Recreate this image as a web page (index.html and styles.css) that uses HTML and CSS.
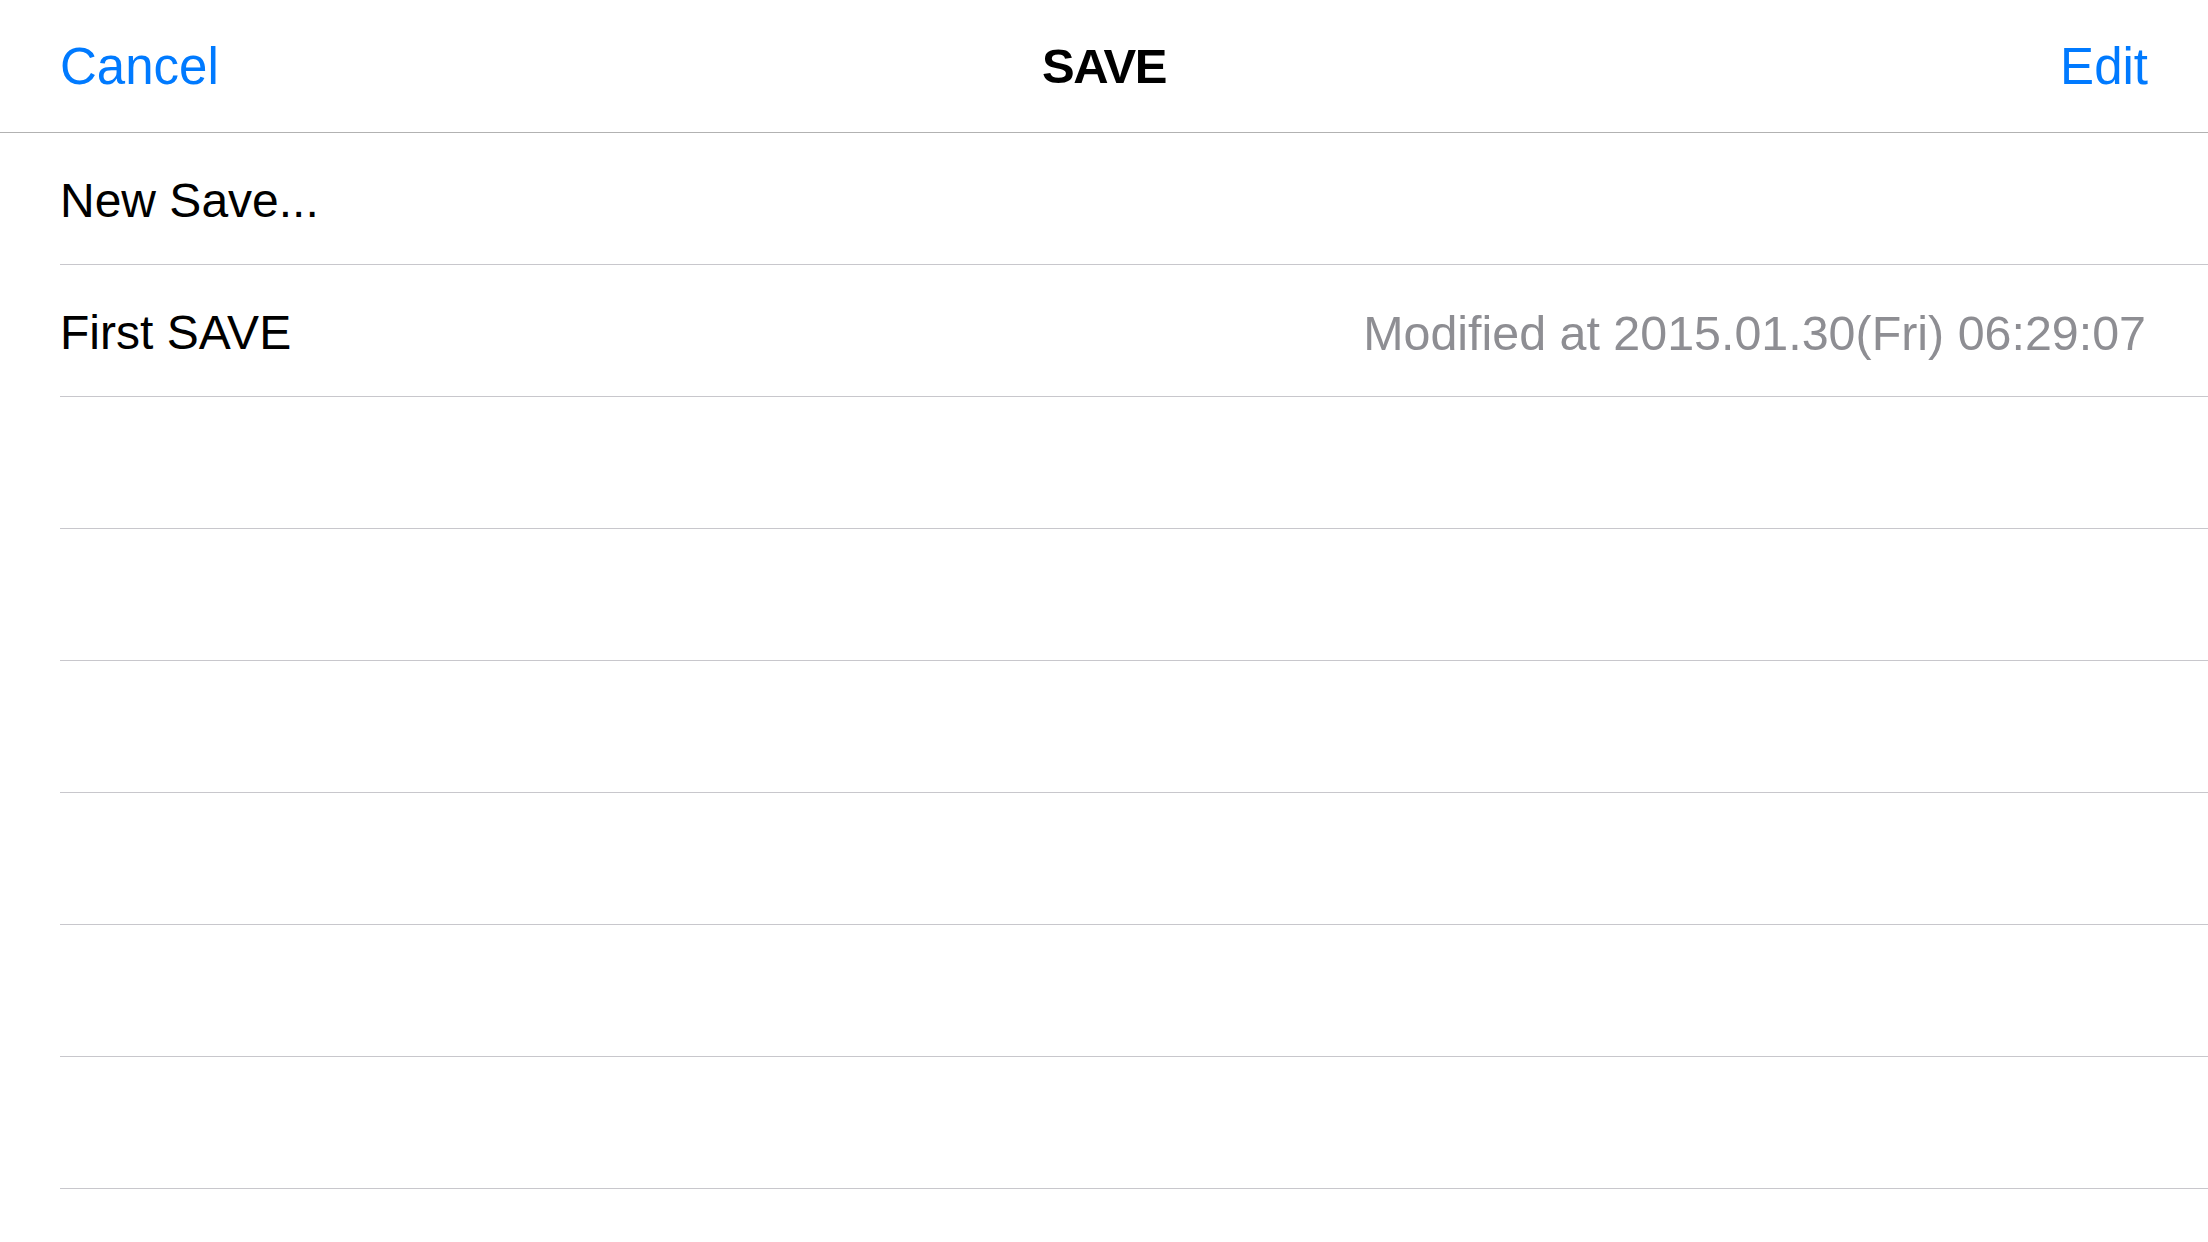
FILE: index.html
```html
<!DOCTYPE html>
<html lang="en">
<head>
<meta charset="utf-8">
<title>SAVE</title>
<link rel="stylesheet" href="styles.css">
</head>
<body>
<header class="nav">
  <span class="nav-btn">Cancel</span>
  <h1 class="nav-title">SAVE</h1>
  <span class="nav-btn nav-btn-right">Edit</span>
</header>
<ul class="list">
  <li class="row"><span class="row-title">New Save...</span></li>
  <li class="row"><span class="row-title">First SAVE</span><span class="row-detail">Modified at 2015.01.30(Fri) 06:29:07</span></li>
  <li class="row"></li>
  <li class="row"></li>
  <li class="row"></li>
  <li class="row"></li>
  <li class="row"></li>
  <li class="row"></li>
</ul>
</body>
</html>
```
FILE: styles.css
```css
html, body {
  margin: 0;
  padding: 0;
  background: #ffffff;
}
body {
  width: 2208px;
  height: 1242px;
  overflow: hidden;
  font-family: "Liberation Sans", Arial, sans-serif;
  font-size: 48px;
  color: #000;
}
.nav {
  height: 132px;
  border-bottom: 1px solid #b2b2b2;
  display: grid;
  grid-template-columns: 1fr auto 1fr;
  align-items: center;
  padding: 0 60px;
  box-sizing: content-box;
  font-size: 51px;
}
.nav-btn {
  color: #007aff;
}
.nav-btn-right {
  justify-self: end;
}
.nav-title {
  margin: 0;
  font-size: 49px;
  font-weight: bold;
  letter-spacing: -1.5px;
}
.list {
  list-style: none;
  margin: 0;
  padding: 0;
}
.row {
  height: 131px;
  margin-left: 60px;
  padding-right: 62px;
  border-bottom: 1px solid #c8c7cc;
  display: flex;
  align-items: center;
  justify-content: space-between;
}
.row-title {
  padding-top: 4px;
}
.row-detail {
  color: #8e8e93;
  font-size: 48.4px;
  padding-top: 4px;
}
```
